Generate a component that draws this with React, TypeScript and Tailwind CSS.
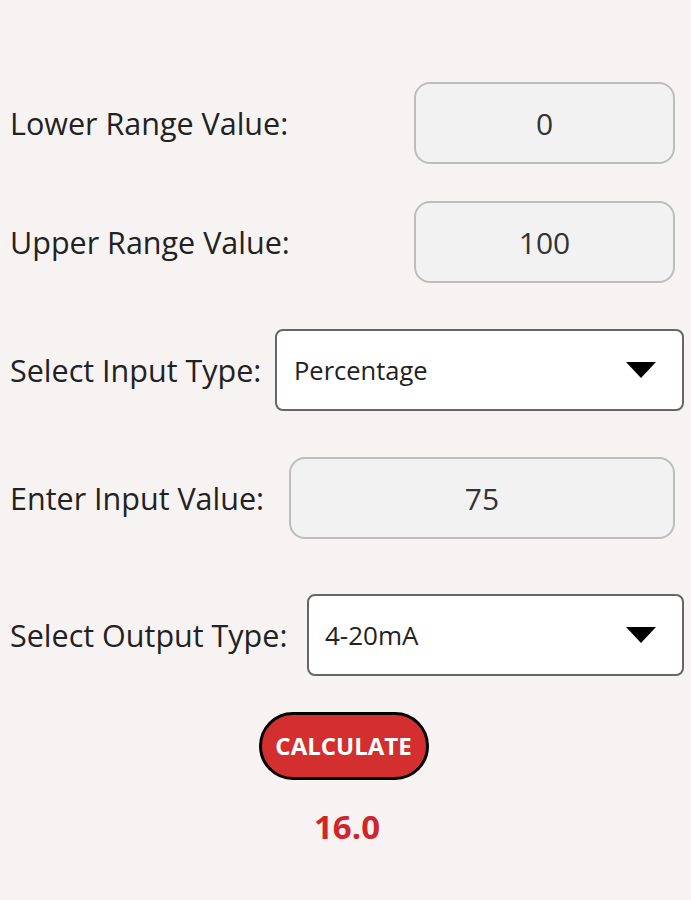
import React, { useState } from 'react';

const font = { fontFamily: '"Open Sans", "Noto Sans", sans-serif' };

const Caret = () => (
  <svg width="30" height="16" viewBox="0 0 30 16" className="shrink-0">
    <polygon points="0,0 30,0 15,16" fill="#000" />
  </svg>
);

export default function App() {
  const [lower, setLower] = useState('0');
  const [upper, setUpper] = useState('100');
  const [input, setInput] = useState('75');

  return (
    <div className="w-[691px] h-[900px] bg-[#f8f3f3] text-[#222] overflow-hidden" style={font}>
      <div className="pt-[82px] flex flex-col">
        {/* Lower range */}
        <div className="flex items-center h-[82px]">
          <label className="w-[414px] pl-[10px] text-[30.5px] leading-none whitespace-nowrap">Lower Range Value:</label>
          <input
            value={lower}
            onChange={(e) => setLower(e.target.value)}
            className="w-[261px] h-[82px] rounded-[16px] border-2 border-[#bdbdbd] bg-[#f3f2f2] text-center text-[30px] text-[#333] outline-none"
          />
        </div>

        {/* Upper range */}
        <div className="flex items-center h-[82px] mt-[37px]">
          <label className="w-[414px] pl-[10px] text-[30.5px] leading-none whitespace-nowrap">Upper Range Value:</label>
          <input
            value={upper}
            onChange={(e) => setUpper(e.target.value)}
            className="w-[261px] h-[82px] rounded-[16px] border-2 border-[#bdbdbd] bg-[#f3f2f2] text-center text-[30px] text-[#333] outline-none"
          />
        </div>

        {/* Input type */}
        <div className="flex items-center h-[82px] mt-[46px]">
          <label className="w-[275px] pl-[10px] text-[30.5px] leading-none whitespace-nowrap">Select Input Type:</label>
          <div className="w-[409px] h-[82px] rounded-[8px] border-2 border-[#666] bg-white flex items-center pl-[17px] pr-[26px]">
            <span className="flex-1 text-[25.5px] text-[#222]">Percentage</span>
            <Caret />
          </div>
        </div>

        {/* Input value */}
        <div className="flex items-center h-[82px] mt-[46px]">
          <label className="w-[289px] pl-[10px] text-[30.5px] leading-none whitespace-nowrap">Enter Input Value:</label>
          <input
            value={input}
            onChange={(e) => setInput(e.target.value)}
            className="w-[386px] h-[82px] rounded-[16px] border-2 border-[#bdbdbd] bg-[#f3f2f2] text-center text-[30px] text-[#333] outline-none"
          />
        </div>

        {/* Output type */}
        <div className="flex items-center h-[82px] mt-[55px]">
          <label className="w-[307px] pl-[10px] text-[30.5px] leading-none whitespace-nowrap">Select Output Type:</label>
          <div className="w-[377px] h-[82px] rounded-[8px] border-2 border-[#666] bg-white flex items-center pl-[16px] pr-[26px]">
            <span className="flex-1 text-[26px] text-[#222]">4-20mA</span>
            <Caret />
          </div>
        </div>

        <div className="flex justify-center mt-[36px]">
          <button className="ml-[-4px] w-[170px] h-[68px] rounded-full border-[3px] border-black bg-[#d32f2f] text-white font-bold text-[24px]">
            CALCULATE
          </button>
        </div>

        <div className="flex justify-center mt-[30px]">
          <span className="ml-[3px] text-[33px] font-bold text-[#d0262b] leading-none">16.0</span>
        </div>
      </div>
    </div>
  );
}
